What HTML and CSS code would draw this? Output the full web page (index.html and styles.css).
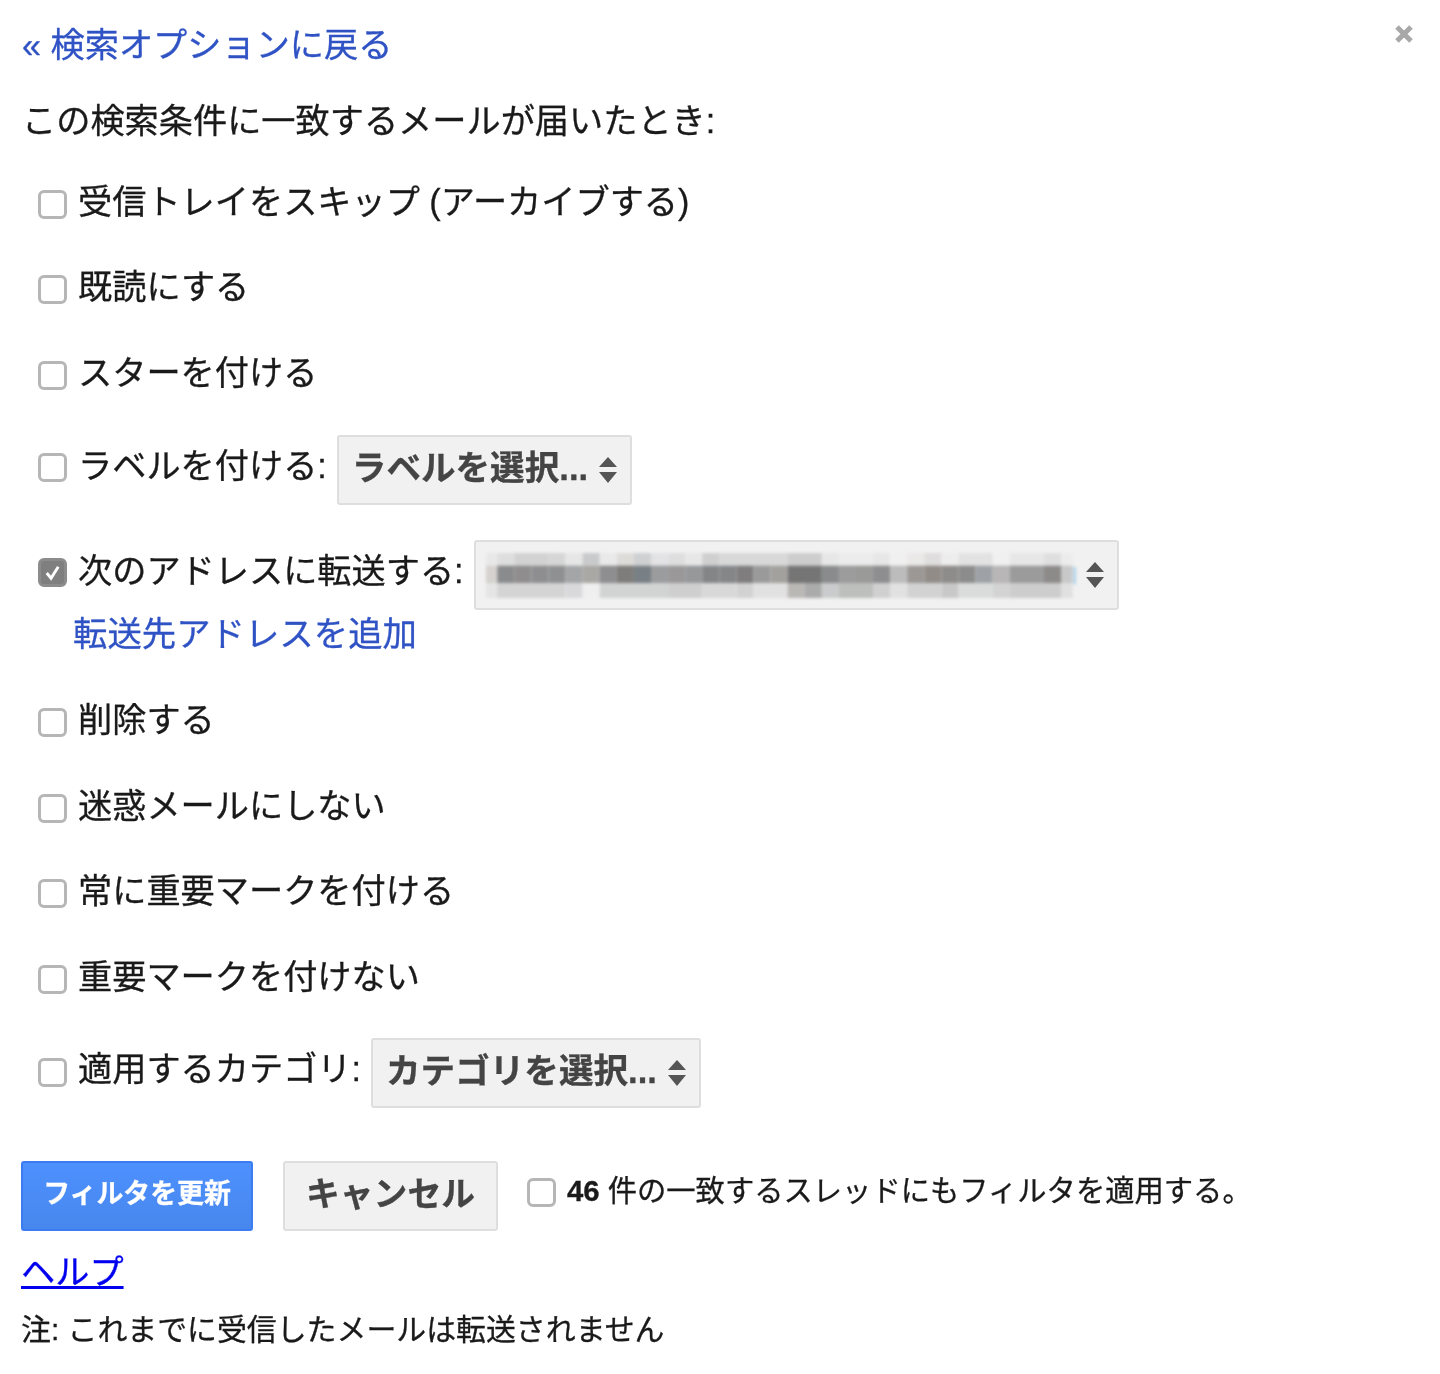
FILE: index.html
```html
<!DOCTYPE html>
<html lang="ja">
<head>
<meta charset="utf-8">
<title>フィルタ</title>
<link rel="stylesheet" href="styles.css">
</head>
<body>
<main class="dialog">
  <svg class="close" viewBox="0 0 20 20" aria-hidden="true"><path d="M3 3L17 17M17 3L3 17"/></svg>
  <a class="link back" href="#">« 検索オプションに戻る</a>
  <p class="heading">この検索条件に一致するメールが届いたとき:</p>
  <div class="options">
    <div class="option first"><span class="box"></span><span class="label">受信トレイをスキップ (アーカイブする)</span></div>
    <div class="option"><span class="box"></span><span class="label">既読にする</span></div>
    <div class="option"><span class="box"></span><span class="label">スターを付ける</span></div>
    <div class="option with-select label-select"><span class="box"></span><span class="label">ラベルを付ける:</span>
      <span class="select select-label"><span class="select-text">ラベルを選択...</span><svg class="arrows" viewBox="0 0 18 26" aria-hidden="true"><path d="M9 0L18 10H0ZM0 15H18L9 26Z"/></svg></span>
    </div>
    <div class="option with-select forward"><span class="box checked"><svg viewBox="0 0 24 24" aria-hidden="true"><path d="M6 12.5L10.5 18L18 6"/></svg></span><span class="label">次のアドレスに転送する:</span>
      <span class="select select-address">
        <svg class="redacted" viewBox="14 70 1416 135" preserveAspectRatio="none" aria-hidden="true">
          <g class="cells">
            <rect x="14" y="70" width="27" height="38" fill="#e8e8e8"/><rect x="41" y="70" width="41" height="38" fill="#dedede"/><rect x="82" y="70" width="82" height="38" fill="#d2d2d3"/><rect x="164" y="70" width="41" height="38" fill="#d6d6d6"/><rect x="205" y="70" width="41" height="38" fill="#e6e6e6"/><rect x="246" y="70" width="41" height="38" fill="#c9cacc"/><rect x="287" y="70" width="41" height="38" fill="#e9e9e9"/><rect x="328" y="70" width="41" height="38" fill="#dedcd9"/><rect x="369" y="70" width="41" height="38" fill="#cfd0d2"/><rect x="410" y="70" width="41" height="38" fill="#e3e3e5"/><rect x="451" y="70" width="41" height="38" fill="#dfdedf"/><rect x="492" y="70" width="41" height="38" fill="#e7e7e7"/><rect x="533" y="70" width="41" height="38" fill="#cfcfcf"/><rect x="574" y="70" width="164" height="38" fill="#d8d8d8"/><rect x="738" y="70" width="82" height="38" fill="#cdcdcd"/><rect x="820" y="70" width="41" height="38" fill="#e7e7e7"/><rect x="861" y="70" width="82" height="38" fill="#ececec"/><rect x="943" y="70" width="41" height="38" fill="#e7e7e7"/><rect x="984" y="70" width="41" height="38" fill="#f0f0f0"/><rect x="1025" y="70" width="41" height="38" fill="#ebe8e8"/><rect x="1066" y="70" width="41" height="38" fill="#dfdddd"/><rect x="1107" y="70" width="41" height="38" fill="#ededed"/><rect x="1148" y="70" width="82" height="38" fill="#e2e2e2"/><rect x="1230" y="70" width="41" height="38" fill="#f0f0f0"/><rect x="1271" y="70" width="82" height="38" fill="#e7e7e7"/><rect x="1353" y="70" width="41" height="38" fill="#dfdfdf"/><rect x="1394" y="70" width="28" height="38" fill="#ececec"/>
            <rect x="14" y="108" width="27" height="52" fill="#d5d2cf"/><rect x="41" y="108" width="41" height="52" fill="#8a8b8d"/><rect x="82" y="108" width="41" height="52" fill="#8f8d8e"/><rect x="123" y="108" width="41" height="52" fill="#8e8e90"/><rect x="164" y="108" width="41" height="52" fill="#8f9091"/><rect x="205" y="108" width="41" height="52" fill="#a3a5a7"/><rect x="246" y="108" width="41" height="52" fill="#aaa8a5"/><rect x="287" y="108" width="41" height="52" fill="#8e8d8f"/><rect x="328" y="108" width="41" height="52" fill="#7f7d7b"/><rect x="369" y="108" width="41" height="52" fill="#788085"/><rect x="410" y="108" width="41" height="52" fill="#9b9c9e"/><rect x="451" y="108" width="41" height="52" fill="#9a9899"/><rect x="492" y="108" width="41" height="52" fill="#96989a"/><rect x="533" y="108" width="41" height="52" fill="#838587"/><rect x="574" y="108" width="41" height="52" fill="#848688"/><rect x="615" y="108" width="41" height="52" fill="#7f7d7d"/><rect x="656" y="108" width="41" height="52" fill="#9a9a9a"/><rect x="697" y="108" width="41" height="52" fill="#a2a19e"/><rect x="738" y="108" width="82" height="52" fill="#757575"/><rect x="820" y="108" width="41" height="52" fill="#8a8b8c"/><rect x="861" y="108" width="41" height="52" fill="#9c9c9c"/><rect x="902" y="108" width="41" height="52" fill="#9a9a98"/><rect x="943" y="108" width="41" height="52" fill="#8e8e90"/><rect x="984" y="108" width="41" height="52" fill="#bcbcbc"/><rect x="1025" y="108" width="41" height="52" fill="#9b9896"/><rect x="1066" y="108" width="41" height="52" fill="#918c87"/><rect x="1107" y="108" width="41" height="52" fill="#8e8c8a"/><rect x="1148" y="108" width="41" height="52" fill="#8c8c8d"/><rect x="1189" y="108" width="41" height="52" fill="#9ea2a7"/><rect x="1230" y="108" width="41" height="52" fill="#b8b6b6"/><rect x="1271" y="108" width="82" height="52" fill="#9b9b9b"/><rect x="1353" y="108" width="41" height="52" fill="#8d8a8a"/><rect x="1394" y="108" width="28" height="52" fill="#c8c8c8"/><rect x="1424" y="112" width="6" height="52" fill="#a9d3ea"/>
            <rect x="14" y="160" width="27" height="45" fill="#e5e5e5"/><rect x="41" y="160" width="164" height="45" fill="#d5d4d4"/><rect x="205" y="160" width="41" height="45" fill="#d9d9dc"/><rect x="246" y="160" width="41" height="45" fill="#efefef"/><rect x="287" y="160" width="164" height="45" fill="#d2d3d3"/><rect x="451" y="160" width="82" height="45" fill="#cfcfd0"/><rect x="533" y="160" width="82" height="45" fill="#d8d8d8"/><rect x="615" y="160" width="41" height="45" fill="#d2d2d2"/><rect x="656" y="160" width="82" height="45" fill="#e1e1e1"/><rect x="738" y="160" width="41" height="45" fill="#b9b8b5"/><rect x="779" y="160" width="41" height="45" fill="#ababab"/><rect x="820" y="160" width="41" height="45" fill="#cacbcc"/><rect x="861" y="160" width="82" height="45" fill="#bcbfbc"/><rect x="943" y="160" width="41" height="45" fill="#d0d0d0"/><rect x="984" y="160" width="41" height="45" fill="#e1e1e1"/><rect x="1025" y="160" width="82" height="45" fill="#d2d2d2"/><rect x="1107" y="160" width="41" height="45" fill="#c8c8c8"/><rect x="1148" y="160" width="82" height="45" fill="#dadcdb"/><rect x="1230" y="160" width="41" height="45" fill="#d3d3d3"/><rect x="1271" y="160" width="123" height="45" fill="#cdcdcd"/><rect x="1394" y="160" width="28" height="45" fill="#e0e0e0"/>
          </g>
        </svg>
        <svg class="arrows" viewBox="0 0 18 26" aria-hidden="true"><path d="M9 0L18 10H0ZM0 15H18L9 26Z"/></svg>
      </span>
    </div>
    <a class="link add-address" href="#">転送先アドレスを追加</a>
    <div class="option after-link"><span class="box"></span><span class="label">削除する</span></div>
    <div class="option"><span class="box"></span><span class="label">迷惑メールにしない</span></div>
    <div class="option"><span class="box"></span><span class="label">常に重要マークを付ける</span></div>
    <div class="option"><span class="box"></span><span class="label">重要マークを付けない</span></div>
    <div class="option with-select category"><span class="box"></span><span class="label">適用するカテゴリ:</span>
      <span class="select select-category"><span class="select-text">カテゴリを選択...</span><svg class="arrows" viewBox="0 0 18 26" aria-hidden="true"><path d="M9 0L18 10H0ZM0 15H18L9 26Z"/></svg></span>
    </div>
  </div>
  <div class="actions">
    <button class="btn btn-primary" type="button">フィルタを更新</button>
    <button class="btn btn-cancel" type="button">キャンセル</button>
    <span class="apply"><span class="box"></span><span class="apply-text"><b>46</b> 件の一致するスレッドにもフィルタを適用する。</span></span>
  </div>
  <a class="help" href="#">ヘルプ</a>
  <p class="note">注: これまでに受信したメールは転送されません</p>
</main>
</body>
</html>
```
FILE: styles.css
```css
* { box-sizing: border-box; }
html, body { margin: 0; background: #fff; }
body {
  font-family: "Liberation Sans", "Noto Sans CJK JP", sans-serif;
  font-size: 34.2px;
  line-height: 40px;
  color: #1a1a1a;
  -webkit-text-stroke: 0.3px currentColor;
}
.dialog {
  position: relative;
  height: 1374px;
  padding: 25px 0 0 21px;
  display: flex;
  flex-direction: column;
  align-items: flex-start;
  filter: blur(0.6px);
}
.close {
  position: absolute;
  top: 24px;
  right: 26px;
  width: 20px;
  height: 20px;
}
.close path { stroke: #a8a8a8; stroke-width: 5; fill: none; }
.link { color: #2f52c4; text-decoration: none; }
.back { display: block; margin-left: 1px; }
.heading { margin: 36px 0 0 1px; }
.options {
  display: flex;
  flex-direction: column;
  align-items: flex-start;
  margin: 40px 0 0 17px;
}
.option {
  display: flex;
  align-items: center;
  height: 40px;
  margin-top: 45.5px;
}
.option.first { margin-top: 0; }
.box {
  flex: none;
  display: block;
  width: 29px;
  height: 29px;
  margin-top: 6px;
  background: #fff;
  border: 3px solid #b6b6b6;
  border-radius: 6px;
}
.box.checked { background: #7f7f7f; border-color: #8c8c8c; }
.box.checked svg { display: block; width: 100%; height: 100%; }
.box.checked path { stroke: #fff; stroke-width: 3; fill: none; }
.label { margin-left: 11px; padding-top: 1px; }
.with-select { height: 70px; }
.with-select .box { margin-top: 0; margin-bottom: 4px; }
.with-select .label { padding-top: 0; padding-bottom: 8px; margin-right: 10px; }
.label-select { margin-top: 42.5px; }
.forward { margin-top: 35px; }
.category { margin-top: 41.5px; }
.category .box { margin-bottom: 1px; }
.select {
  display: flex;
  align-items: center;
  height: 70px;
  background: #f1f1f1;
  border: 2px solid #dedede;
  border-radius: 3px;
  font-weight: 700;
  color: #444;
  font-size: 34.6px;
}
.select-text { flex: 1; padding-left: 13px; padding-bottom: 4px; white-space: nowrap; }
.select-label { width: 295px; }
.select-category { width: 330px; }
.select-address { width: 645px; padding-left: 10px; }
.redacted { display: block; width: 590px; height: 45px; margin-top: 2px; flex: none; filter: blur(1.6px); }
.arrows { flex: none; width: 18px; height: 26px; margin: 0 13px 0 4px; }
.select-address .arrows { margin-left: auto; }
.arrows path { fill: #555; }
.add-address { display: block; margin: 4px 0 0 35px; font-size: 34.4px; }
.after-link { margin-top: 46px; }
.actions {
  display: flex;
  align-items: center;
  margin-top: 53px;
}
.btn {
  display: block;
  height: 70px;
  padding: 0 0 4px;
  border-radius: 3px;
  font-family: inherit;
  font-weight: 700;
  line-height: 40px;
  -webkit-text-stroke: inherit;
}
.btn-primary {
  width: 232px;
  background: linear-gradient(#4d90fe, #4787ed);
  border: 2px solid #3b7df0;
  color: #fff;
  font-size: 26.9px;
}
.btn-cancel {
  width: 215px;
  margin-left: 30px;
  background: #f1f1f1;
  border: 2px solid #dedede;
  color: #444;
  font-size: 33.8px;
}
.apply {
  display: flex;
  align-items: center;
  margin-left: 29px;
  padding-bottom: 10px;
  font-size: 29.3px;
}
.apply .box { margin-top: 4px; }
.apply-text { margin-left: 11px; }
.help {
  display: block;
  margin: 21px 0 0;
  color: #0000ee;
  text-decoration: underline;
}
.note { margin: 18px 0 0; font-size: 29.9px; }
```
